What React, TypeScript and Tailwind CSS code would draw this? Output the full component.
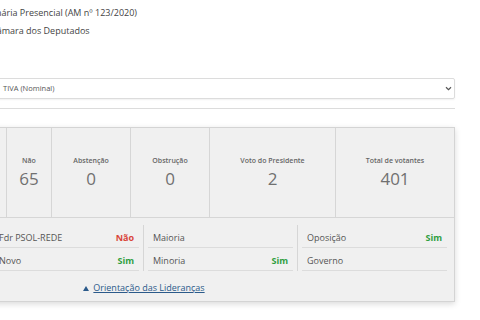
export default function App() {
  const stats = [
    { label: "Sim", value: "334", w: "flex-1" },
    { label: "Não", value: "65", w: "w-[45px]" },
    { label: "Abstenção", value: "0", w: "w-[79px]" },
    { label: "Obstrução", value: "0", w: "w-[79px]" },
    { label: "Voto do Presidente", value: "2", w: "w-[126px]" },
    { label: "Total de votantes", value: "401", w: "w-[118px]" },
  ];
  const cols = [
    {
      cls: "flex-1",
      rows: [
        { name: "", vote: "" },
        { name: "", vote: "" },
      ],
    },
    {
      cls: "w-[154px]",
      rows: [
        { name: "Fdr PSOL-REDE", vote: "Não" },
        { name: "Novo", vote: "Sim" },
      ],
    },
    {
      cls: "w-[154px]",
      rows: [
        { name: "Maioria", vote: "" },
        { name: "Minoria", vote: "Sim" },
      ],
    },
    {
      cls: "w-[154px]",
      rows: [
        { name: "Oposição", vote: "Sim" },
        { name: "Governo", vote: "" },
      ],
    },
  ];
  return (
    <div className="w-[480px] h-[320px] overflow-hidden bg-white text-[#444] font-['Open_Sans',sans-serif]">
      <div className="pt-[7px] text-[9px] leading-[12px] whitespace-nowrap">
        <p className="-ml-[4px]">nária Presencial (AM nº 123/2020)</p>
        <p className="-ml-[9px] mt-[6px]">Câmara dos Deputados</p>
      </div>

      <div className="-ml-[167px] w-[622px]">
        <div className="mt-[41px] h-[21px] border border-[#dcdcdc] rounded-[2px] flex items-center justify-between pl-[169px] pr-[2px] shadow-[0_1px_2px_rgba(0,0,0,0.06)]">
          <span className="text-[7.5px] text-[#555] whitespace-nowrap">TIVA (Nominal)</span>
          <svg width="7" height="5" viewBox="0 0 7 5">
            <path d="M1 1.2 L3.5 3.6 L6 1.2" fill="none" stroke="#555" strokeWidth="1.2" />
          </svg>
        </div>
        <div className="mt-[9px] border-t border-[#dcdcdc]" />

        <div className="mt-[18px] border border-[#d4d4d4] bg-[#f0f0f0] shadow-[0_2px_6px_rgba(0,0,0,0.15)]">
          <div className="flex h-[90px] border-b border-[#d6d6d6]">
            {stats.map((s, i) => (
              <div
                key={s.label}
                className={`${s.w} ${i < stats.length - 1 ? "border-r border-[#d6d6d6]" : ""} flex flex-col items-center pt-[29px]`}
              >
                <span className="text-[7px] leading-[8px] font-semibold text-[#666] whitespace-nowrap">{s.label}</span>
                <span className="mt-[4px] text-[17px] leading-[20px] text-[#707070]">{s.value}</span>
              </div>
            ))}
          </div>

          <div className="flex pt-[7px] pr-[7px]">
            {cols.map((c, ci) => (
              <div key={ci} className={`flex ${c.cls}`}>
                {ci > 0 && <div className="w-px bg-[#d6d6d6] mx-[4px]" />}
                <div className="flex-1 flex flex-col">
                  {c.rows.map((r, ri) => (
                    <div
                      key={ri}
                      className="h-[23px] pt-[3px] border-b border-[#dcdcdc] flex items-center justify-between px-[5px] text-[9px] whitespace-nowrap"
                    >
                      <span className="text-[#555]">{r.name}</span>
                      <span
                        className={`font-bold ${r.vote === "Não" ? "text-[#d9453a]" : "text-[#2f9e3f]"}`}
                      >
                        {r.vote}
                      </span>
                    </div>
                  ))}
                </div>
              </div>
            ))}
          </div>

          <div className="pt-[11px] pb-[7px] flex justify-center items-center leading-[12px]">
            <svg width="6" height="5" viewBox="0 0 6 5" className="mr-[4px]">
              <path d="M3 0 L6 5 L0 5 Z" fill="#2b5a8a" />
            </svg>
            <a className="text-[9px] text-[#2b5a8a] underline">Orientação das Lideranças</a>
          </div>
        </div>
      </div>
    </div>
  );
}
